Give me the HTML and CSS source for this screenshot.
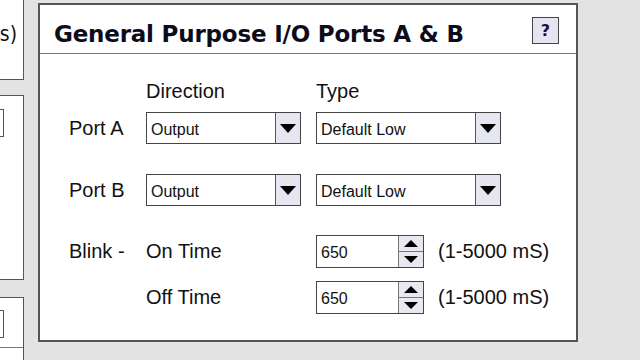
FILE: index.html
```html
<!DOCTYPE html>
<html lang="en">
<head>
  <meta charset="UTF-8" />
  <title>GPIO Ports</title>
  <meta name="viewport" content="width=device-width, initial-scale=1.0" />
  <link rel="stylesheet" href="styles.css">
</head>
<body>
  <div class="page">
    <div class="side">
      <div class="side-box box-1"><span class="side-text">s)</span></div>
      <div class="side-box box-2"><div class="side-ctrl"></div></div>
      <div class="side-box box-3"><div class="side-ctrl"></div><div class="side-line"></div></div>
    </div>

    <div class="panel">
      <div class="panel-head">
        <h2>General Purpose I/O Ports A &amp; B</h2>
        <span class="help-btn">?</span>
      </div>
      <div class="panel-body">
        <div class="row head-row">
          <div class="c-label"></div>
          <div class="c-dir">Direction</div>
          <div class="c-type">Type</div>
        </div>
        <div class="row sel-row">
          <div class="c-label">Port A</div>
          <div class="c-dir"><div class="combo"><span class="combo-val">Output</span><span class="combo-btn"><i class="tri-down"></i></span></div></div>
          <div class="c-type"><div class="combo wide"><span class="combo-val">Default Low</span><span class="combo-btn"><i class="tri-down"></i></span></div></div>
        </div>
        <div class="row sel-row row-b">
          <div class="c-label">Port B</div>
          <div class="c-dir"><div class="combo"><span class="combo-val">Output</span><span class="combo-btn"><i class="tri-down"></i></span></div></div>
          <div class="c-type"><div class="combo wide"><span class="combo-val">Default Low</span><span class="combo-btn"><i class="tri-down"></i></span></div></div>
        </div>
        <div class="row spin-row">
          <div class="c-label">Blink -</div>
          <div class="c-dir">On Time</div>
          <div class="c-type"><div class="spin"><span class="spin-val">650</span><span class="spin-btns"><span class="spin-btn"><i class="tri-up"></i></span><span class="spin-btn"><i class="tri-down sm"></i></span></span></div></div>
          <div class="c-unit">(1-5000 mS)</div>
        </div>
        <div class="row spin-row row-off">
          <div class="c-label"></div>
          <div class="c-dir">Off Time</div>
          <div class="c-type"><div class="spin"><span class="spin-val">650</span><span class="spin-btns"><span class="spin-btn"><i class="tri-up"></i></span><span class="spin-btn"><i class="tri-down sm"></i></span></span></div></div>
          <div class="c-unit">(1-5000 mS)</div>
        </div>
      </div>
    </div>
  </div>
</body>
</html>
```

FILE: styles.css
```css
* { box-sizing: border-box; }
body {
  margin: 0;
  background: #e3e3e3;
  font-family: 'Liberation Sans', Arial, sans-serif;
  color: #111;
  width: 640px;
  height: 360px;
  overflow: hidden;
}
.page { display: flex; align-items: flex-start; }

/* partial panels on the left edge */
.side { width: 24px; margin-right: 14px; overflow: hidden; }
.side-box {
  background: #fff;
  border: 1px solid #555;
  border-left: none;
  width: 24px;
  position: relative;
}
.box-1 { height: 82px; margin-top: -2px; }
.box-2 { height: 185px; margin-top: 15px; padding-top: 13px; }
.box-3 { height: 80px; margin-top: 17px; padding-top: 12px; }
.side-text { position: absolute; right: 6px; top: 23px; font-size: 21px; font-family: 'DejaVu Sans Condensed', 'Liberation Sans', sans-serif; }
.side-ctrl { width: 4px; height: 28px; border: 1px solid #555; border-left: none; background: #fff; }
.side-line { margin-top: 9px; border-top: 1px solid #777; }

/* main panel */
.panel {
  margin-top: 3px;
  width: 540px;
  height: 339px;
  background: #fff;
  border: 2px solid #555;
}
.panel-head {
  height: 49px;
  border-bottom: 1px solid #777;
  display: flex;
  align-items: center;
  justify-content: space-between;
  padding: 0 17px 0 14px;
}
.panel-head h2 {
  margin: 10px 0 0;
  font-family: 'DejaVu Sans', Verdana, sans-serif;
  font-weight: bold;
  font-size: 23px;
  letter-spacing: -0.2px;
  color: #0c0c1c;
}
.help-btn {
  width: 27px;
  height: 27px;
  margin-top: 3px;
  border: 1px solid #444;
  background: #e6e4f0;
  display: flex;
  align-items: center;
  justify-content: center;
  font-weight: bold;
  font-size: 16px;
  font-family: 'DejaVu Sans', sans-serif;
  color: #1a1040;
}

.panel-body { padding: 22px 0 0 29px; }
.row { display: flex; align-items: center; font-size: 20px; }
.c-label { width: 77px; }
.c-dir { width: 170px; }
.c-type { width: 122px; }
.head-row { height: 35px; padding-bottom: 4px; }
.sel-row { height: 32px; padding-top: 2px; }
.row-b { margin-top: 30px; }
.spin-row { height: 33px; margin-top: 29px; padding-top: 2px; }
.row-off { margin-top: 13px; }

.combo, .spin {
  display: flex;
  height: 32px;
  border: 1px solid #444;
  background: #fff;
}
.combo { width: 155px; }
.combo.wide { width: 185px; }
.combo-val, .spin-val {
  flex: 1;
  padding: 3px 0 0 4px;
  font-size: 16px;
  display: flex;
  align-items: center;
}
.combo-btn {
  width: 25px;
  border-left: 1px solid #555;
  background: #e6e6f0;
  display: flex;
  align-items: center;
  justify-content: center;
}
.tri-down, .tri-up {
  width: 0;
  height: 0;
  border-left: 8px solid transparent;
  border-right: 8px solid transparent;
}
.tri-down { border-top: 9px solid #000; }
.tri-up { border-bottom: 7px solid #000; border-left-width: 7px; border-right-width: 7px; }
.tri-down.sm { border-top-width: 7px; border-left-width: 7px; border-right-width: 7px; }

.spin { width: 108px; height: 33px; }
.spin-btns {
  width: 25px;
  border-left: 1px solid #777;
  display: flex;
  flex-direction: column;
}
.spin-btn {
  flex: 1;
  background: #e8e8f0;
  display: flex;
  align-items: center;
  justify-content: center;
}
.spin-btn + .spin-btn { border-top: 1px solid #777; }
.c-unit { font-size: 20px; }
```
